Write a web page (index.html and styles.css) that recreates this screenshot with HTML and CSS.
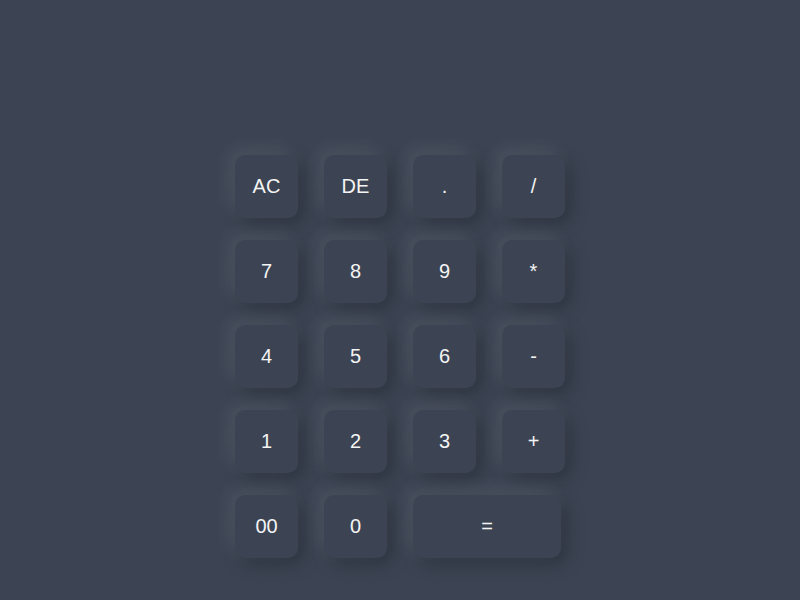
FILE: index.html
```html
<!DOCTYPE html>
<html>
<head>
<meta charset="utf-8">
<link rel="stylesheet" href="styles.css">
</head>
<body>
<div class="calc">
  <div class="keys">
    <button class="key">AC</button>
    <button class="key">DE</button>
    <button class="key">.</button>
    <button class="key">/</button>
    <button class="key">7</button>
    <button class="key">8</button>
    <button class="key">9</button>
    <button class="key">*</button>
    <button class="key">4</button>
    <button class="key">5</button>
    <button class="key">6</button>
    <button class="key">-</button>
    <button class="key">1</button>
    <button class="key">2</button>
    <button class="key">3</button>
    <button class="key">+</button>
    <button class="key">00</button>
    <button class="key">0</button>
    <button class="key wide">=</button>
  </div>
</div>
</body>
</html>
```
FILE: styles.css
```css
html, body {
  margin: 0;
  padding: 0;
  background: #3c4453;
  height: 100%;
  overflow: hidden;
}
.calc {
  display: flex;
  justify-content: center;
  padding-top: 155px;
}
.keys {
  display: grid;
  grid-template-columns: repeat(4, 63px);
  grid-auto-rows: 63px;
  column-gap: 26px;
  row-gap: 22px;
}
.key {
  border: none;
  border-radius: 10px;
  background: #3c4453;
  color: #f4f4f4;
  font-family: "Liberation Sans", Arial, sans-serif;
  font-size: 20px;
  padding: 0;
  box-shadow: -6px -6px 18px rgba(255, 255, 255, 0.09), 6px 6px 18px rgba(0, 0, 0, 0.25);
}
.wide {
  grid-column: span 2;
  width: 148px;
}
```
